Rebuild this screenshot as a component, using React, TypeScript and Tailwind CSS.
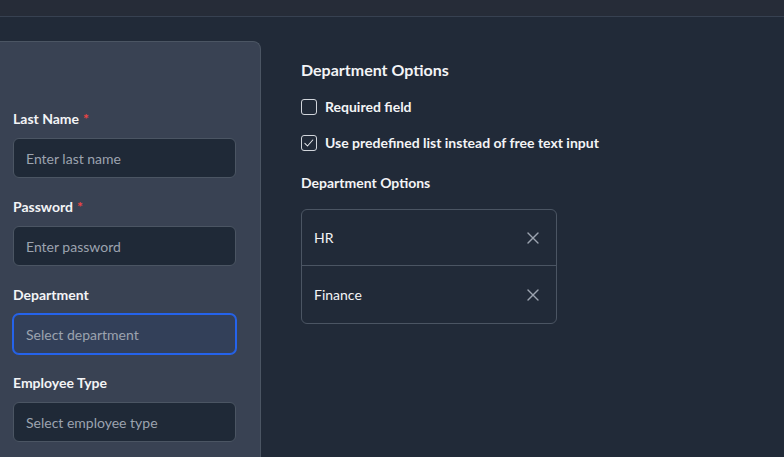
import { X } from 'lucide-react'

type Field = {
  label: string
  placeholder: string
  required?: boolean
  focused?: boolean
}

const fields: Field[] = [
  { label: 'Last Name', placeholder: 'Enter last name', required: true },
  { label: 'Password', placeholder: 'Enter password', required: true },
  { label: 'Department', placeholder: 'Select department', focused: true },
  { label: 'Employee Type', placeholder: 'Select employee type' },
]

function Checkbox({ checked, label }: { checked?: boolean; label: string }) {
  return (
    <label className="flex h-5 items-center gap-2">
      <span className="flex h-4 w-4 items-center justify-center rounded-[3px] border-[1.5px] border-[#d1d5db]">
        {checked && (
          <svg viewBox="0 0 16 16" className="h-3 w-3" fill="none">
            <path d="M2.5 8.5l3.5 3.5 7-8" stroke="#e5e7eb" strokeWidth="1.4" strokeLinecap="round" strokeLinejoin="round" />
          </svg>
        )}
      </span>
      <span className="text-sm font-bold text-[#f3f4f6]">{label}</span>
    </label>
  )
}

export default function App() {
  return (
    <div className="flex h-[457px] w-full flex-col overflow-hidden bg-[#212a38] font-['Lato',sans-serif]">
      <div className="h-[17px] shrink-0 border-b border-[#374151] bg-[#262c38]" />

      <div className="flex flex-1 pt-6">
        <div className="w-[261px] shrink-0 rounded-tr-lg border-t border-r border-[#4b5563] bg-[#394253] pt-[68px] pr-6 pl-[13px]">
          {fields.map((field) => (
            <div key={field.label} className="mb-5">
              <div className="mb-2 -translate-y-px text-sm leading-5 font-bold text-[#f3f4f6]">
                {field.label}
                {field.required && <span className="ml-1 text-[#ef4444]">*</span>}
              </div>
              <div
                className={
                  field.focused
                    ? 'flex h-10 items-center rounded-md border border-[#2563eb] bg-[#334059] px-3 ring-1 ring-[#2563eb]'
                    : 'flex h-10 items-center rounded-md border border-[#4b5563] bg-[#1f2937] px-3'
                }
              >
                <span className="pt-px text-sm text-[#9ca3af]">{field.placeholder}</span>
              </div>
            </div>
          ))}
        </div>

        <div className="ml-10 pt-[17px]">
          <h3 className="text-base leading-6 font-bold text-[#f3f4f6]">Department Options</h3>

          <div className="mt-[15px] flex flex-col gap-4">
            <Checkbox label="Required field" />
            <Checkbox checked label="Use predefined list instead of free text input" />
          </div>

          <div className="mt-5 text-sm leading-5 font-bold text-[#f3f4f6]">Department Options</div>

          <div className="mt-4 w-64 divide-y divide-[#4b5563] rounded-md border border-[#4b5563]">
            {['HR', 'Finance'].map((option, i) => (
              <div
                key={option}
                className={
                  i === 0
                    ? 'flex h-14 items-center justify-between pr-[13px] pl-3'
                    : 'flex h-[57px] items-center justify-between pr-[13px] pl-3'
                }
              >
                <span className="pt-px text-sm text-[#f3f4f6]">{option}</span>
                <X size={20} strokeWidth={1.6} className="text-[#9ca3af]" />
              </div>
            ))}
          </div>
        </div>
      </div>
    </div>
  )
}
